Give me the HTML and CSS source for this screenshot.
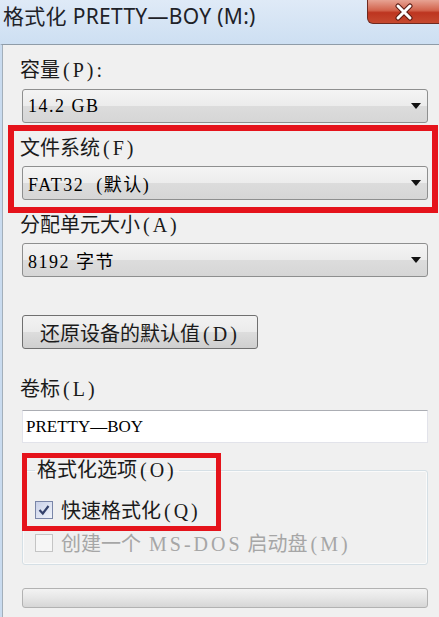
FILE: index.html
```html
<!DOCTYPE html>
<html lang="zh-CN">
<head>
    <meta charset="UTF-8">
    <meta name="viewport" content="width=device-width, initial-scale=1.0">
    <title>格式化 PRETTY—BOY (M:)</title>
    <link rel="stylesheet" href="styles.css">
</head>
<body>
    <div class="titlebar">
        <span class="title">格式化 PRETTY—BOY (M:)</span>
        <span class="close">
            <svg width="22" height="18" viewBox="0 0 22 18">
                <path d="M5 3 L17 15 M17 3 L5 15" stroke="#5a1a12" stroke-width="5" stroke-linecap="round"/>
                <path d="M5 3 L17 15 M17 3 L5 15" stroke="#ffffff" stroke-width="3" stroke-linecap="round"/>
            </svg>
        </span>
    </div>

    <div class="window">
        <div class="label first">容量<span class="key">(P):</span></div>
        <div class="combo"><span>14.2 GB</span><i class="arrow"></i></div>

        <div class="label">文件系统<span class="key">(F)</span></div>
        <div class="combo"><span>FAT32 &nbsp;(默认)</span><i class="arrow"></i></div>

        <div class="label">分配单元大小<span class="key">(A)</span></div>
        <div class="combo"><span>8192 字节</span><i class="arrow"></i></div>

        <button class="btn">还原设备的默认值<span class="key">(D)</span></button>

        <div class="label volume">卷标<span class="key">(L)</span></div>
        <div class="textbox">PRETTY—BOY</div>

        <fieldset class="group">
            <legend>格式化选项<span class="key">(O)</span></legend>
            <label class="check">
                <span class="box checked">
                    <svg width="14" height="14" viewBox="0 0 14 14">
                        <path d="M2.5 7 L5.8 10.5 L11.5 3" fill="none" stroke="#33416b" stroke-width="2.2"/>
                    </svg>
                </span>
                <span>快速格式化<span class="key">(Q)</span></span>
            </label>
            <label class="check disabled">
                <span class="box"></span>
                <span>创建一个 <span class="key">MS-DOS</span> 启动盘<span class="key">(M)</span></span>
            </label>
        </fieldset>

        <div class="progress"></div>
    </div>

    <!-- red annotation frames drawn over the dialog -->
    <div class="mark mark-fs"></div>
    <div class="mark mark-opt"></div>
</body>
</html>
```

FILE: styles.css
```css
body {
    margin: 0;
    width: 439px;
    height: 617px;
    overflow: hidden;
    position: relative;
    background-color: #f0f0f0;
    font-family: "Liberation Serif", "Noto Sans CJK SC", serif;
    color: #1b1b1b;
}

.titlebar {
    height: 44px;
    display: flex;
    justify-content: space-between;
    align-items: flex-start;
    background: linear-gradient(#dfeaf7, #cddff2);
}

.title {
    padding: 3px 0 0 3px;
    font-family: "Noto Sans", "Noto Sans CJK SC", sans-serif;
    font-size: 21px;
    line-height: 26px;
    color: #1e2228;
    letter-spacing: 0.3px;
}

.close {
    width: 74px;
    height: 24px;
    margin-right: -2px;
    box-sizing: border-box;
    display: flex;
    align-items: center;
    justify-content: center;
    border: 1px solid #6e2a20;
    border-top: none;
    border-radius: 0 0 0 6px;
    background: linear-gradient(#e7a393 0%, #d2634c 45%, #bd3520 55%, #c6492f 100%);
}

.window {
    height: 572px;
    border-top: 1px solid #8f9ca8;
    border-left: 2px solid #c9dbef;
    box-shadow: inset 1px 0 #a3afba;
    padding: 0 11px 0 20px;
}

.key {
    letter-spacing: 3px;
    margin-left: 3px;
}

.label {
    margin-top: 13px;
    font-size: 20px;
    line-height: 24px;
    margin-left: -2px;
}

.combo {
    margin-top: 6px;
    height: 34px;
    box-sizing: border-box;
    display: flex;
    align-items: center;
    padding-left: 5px;
    border: 1px solid #8e8f8f;
    border-radius: 3px;
    background: linear-gradient(#f4f4f4 0%, #ececec 50%, #dcdcdc 51%, #d6d6d6 100%);
    font-size: 18px;
    letter-spacing: 1.5px;
    color: #000;
}

.label.first + .combo {
    margin-top: 7px;
}

.arrow {
    margin-left: auto;
    margin-right: 6px;
    width: 0;
    height: 0;
    border-left: 5px solid transparent;
    border-right: 5px solid transparent;
    border-top: 6px solid #111;
}

.btn {
    display: block;
    margin-top: 38px;
    width: 236px;
    height: 34px;
    padding: 0;
    border: 1px solid #707070;
    border-radius: 3px;
    background: linear-gradient(#f2f2f2 0%, #ebebeb 50%, #dddddd 51%, #cfcfcf 100%);
    font-family: inherit;
    font-size: 20px;
    color: #1b1b1b;
}

.label.volume {
    margin-top: 28px;
}

.textbox {
    margin-top: 9px;
    height: 33px;
    box-sizing: border-box;
    display: flex;
    align-items: center;
    padding-left: 3px;
    background-color: #fff;
    border: 1px solid #e2e3ea;
    border-top-color: #abadb3;
    font-size: 17px;
    color: #000;
}

.group {
    margin: 15px 0 0;
    padding: 11px 0 5px 12px;
    border: 1px solid #d5dfe5;
    border-radius: 3px;
    box-shadow: inset 0 0 0 1px #fafafa;
}

.group legend {
    padding: 0 2px;
    font-size: 20px;
    line-height: 24px;
}

.check {
    height: 33px;
    display: flex;
    align-items: center;
    gap: 8px;
    font-size: 20px;
}

.box {
    width: 18px;
    height: 18px;
    box-sizing: border-box;
    display: flex;
    align-items: center;
    justify-content: center;
    border: 1px solid #8f8f8f;
    background: linear-gradient(135deg, #dcdcdc, #fbfbfb);
}

.box.checked {
    border-color: #7a86a8;
    background: linear-gradient(135deg, #c9d1e8, #f0f3fa);
}

.check.disabled {
    color: #a6a6a6;
}

.check.disabled .box {
    border-color: #c4c4c4;
    background: #f6f6f6;
}

.progress {
    margin-top: 23px;
    height: 20px;
    box-sizing: border-box;
    border: 1px solid #b2b2b2;
    border-radius: 3px;
    background: linear-gradient(#f3f3f3 0%, #e6e6e6 50%, #d6d6d6 100%);
}

.mark {
    position: absolute;
    box-sizing: border-box;
    border: 6px solid #e5131b;
}

.mark-fs {
    left: 8px;
    top: 125px;
    width: 430px;
    height: 88px;
}

.mark-opt {
    left: 22px;
    top: 453px;
    width: 199px;
    height: 78px;
    border-width: 5px;
}
```
